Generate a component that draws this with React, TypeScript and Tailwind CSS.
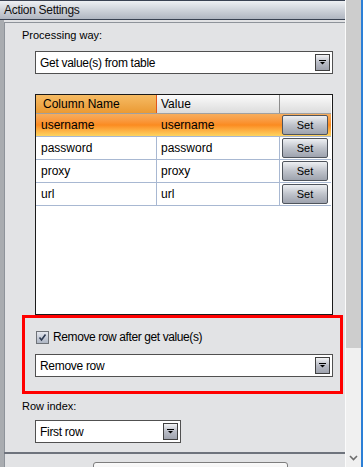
import React from "react";

const font = { fontFamily: '"Liberation Sans", Arial, sans-serif' };

function DropBtn() {
  return (
    <div className="w-[15px] h-[17px] border border-[#3f3f3f] bg-gradient-to-b from-[#f2f3f5] via-[#b9bcc6] to-[#9fa3ae] flex items-center justify-center">
      <svg width="7" height="5" viewBox="0 0 7 5">
        <rect x="0" y="0" width="7" height="1" fill="#000" />
        <polygon points="1,2 6,2 3.5,4.5" fill="#000" />
      </svg>
    </div>
  );
}

function Select({ text, w }: { text: string; w: string }) {
  return (
    <div className={`${w} h-[23px] border border-[#505050] bg-white flex items-center justify-between pl-[4px] pr-[2px]`}>
      <span className="text-[12px] text-black leading-none tracking-[-0.3px]">{text}</span>
      <DropBtn />
    </div>
  );
}

function SetBtn() {
  return (
    <div className="w-[46px] h-[20px] rounded-[2px] border border-[#4f545c] bg-gradient-to-b from-[#eef0f3] via-[#bfc3cb] to-[#9ea3ae] flex items-center justify-center text-[11px] text-black">
      Set
    </div>
  );
}

const rows = ["username", "password", "proxy", "url"];

export default function App() {
  return (
    <div className="w-[363px] h-[467px] flex overflow-hidden bg-[#e2e3e5] text-[11px]" style={font}>
      <div className="w-[345px] flex flex-col">
        <div className="h-[20px] border-t border-b border-[#3a4252] bg-gradient-to-b from-[#eef0f3] to-[#b0b6c1] flex items-center pl-[4px] text-[12px] tracking-[-0.3px] text-[#111]">
          Action Settings
        </div>
        <div className="flex flex-1">
          <div className="w-[4px] bg-[#a9acb0]" />
          <div className="flex-1 flex flex-col mt-[2px] border-t border-l border-[#8e939a]">
            <div className="pl-[17px] pt-[4px] h-[20px] leading-[16px] text-[11px] text-black">Processing way:</div>
            <div className="pl-[30px] mt-[8px]">
              <Select text="Get value(s) from table" w="w-[298px]" />
            </div>
            <div className="pl-[30px] mt-[20px]">
              <div className="w-[298px] h-[221px] border border-[#1a1a1a] bg-white flex flex-col pr-[1px]">
                <div className="h-[19px] flex border-b border-[#a0a0a0] text-[12px] text-black">
                  <div className="w-[121px] border-r border-[#e2561a] bg-gradient-to-b from-[#f5bb63] to-[#eb9a32] flex items-center pl-[7px]">Column Name</div>
                  <div className="w-[123px] border-r border-[#8c8c8c] bg-gradient-to-b from-[#fbfbfb] to-[#dcdcdc] flex items-center pl-[4px]">Value</div>
                  <div className="flex-1 bg-gradient-to-b from-[#fbfbfb] to-[#dcdcdc]" />
                </div>
                {rows.map((r, i) => (
                  <div
                    key={r}
                    className={`h-[23px] flex border-b border-[#a8b8d2] text-[12px] text-black ${
                      i === 0 ? "bg-gradient-to-b from-[#f6ad5c] via-[#fb8b1f] to-[#fdd460]" : "bg-white"
                    }`}
                  >
                    <div className={`w-[121px] flex items-center pl-[5px] ${i === 0 ? "" : "border-r border-[#a8b8d2]"}`}>{r}</div>
                    <div className={`w-[123px] flex items-center pl-[4px] ${i === 0 ? "" : "border-r border-[#a8b8d2]"}`}>{r}</div>
                    <div className="flex-1 flex items-center pl-[2px]">
                      <SetBtn />
                    </div>
                  </div>
                ))}
              </div>
            </div>
            <div className="ml-[17px] w-[321px] h-[79px] border-[3px] border-[#ff0000] pt-[13px] pl-[10px]">
              <div className="flex items-center h-[12px] pl-[1px]">
                <div className="w-[13px] h-[13px] border border-[#6f7378] bg-gradient-to-b from-[#e4e7ee] to-[#aeb6c4] flex items-center justify-center">
                  <svg width="9" height="9" viewBox="0 0 9 9">
                    <path d="M1.5 4.5 L3.5 7 L7.5 1.5" stroke="#2d3a52" strokeWidth="1.6" fill="none" />
                  </svg>
                </div>
                <span className="ml-[4px] text-[12px] tracking-[-0.4px] text-black">Remove row after get value(s)</span>
              </div>
              <div className="mt-[11px]">
                <Select text="Remove row" w="w-[298px]" />
              </div>
            </div>
            <div className="pl-[17px] mt-[4px] h-[16px] leading-[16px] text-[11px] text-black">Row index:</div>
            <div className="pl-[30px] mt-[6px]">
              <Select text="First row" w="w-[146px]" />
            </div>
            <div className="mt-[9px] h-[2px] bg-[#6e737c] -ml-[1px]" />
            <div className="pl-[88px] mt-[8px]">
              <div className="w-[195px] h-[20px] rounded-t-[3px] border border-[#7d7d7d] bg-gradient-to-b from-[#fafafa] to-[#e6e6e6]" />
            </div>
          </div>
        </div>
      </div>
      <div className="w-[16px] flex flex-col border-l border-[#fbfbfb] bg-[#f0f0f0]">
        <div className="h-[348px] bg-[#cdcdcd]" />
        <div className="flex-1 flex items-end justify-center pb-[6px]">
          <svg width="9" height="6" viewBox="0 0 9 6">
            <path d="M1 1 L4.5 4.5 L8 1" stroke="#6d6d6d" strokeWidth="1.6" fill="none" />
          </svg>
        </div>
      </div>
      <div className="w-[2px] bg-[#2b7fd6]" />
    </div>
  );
}
